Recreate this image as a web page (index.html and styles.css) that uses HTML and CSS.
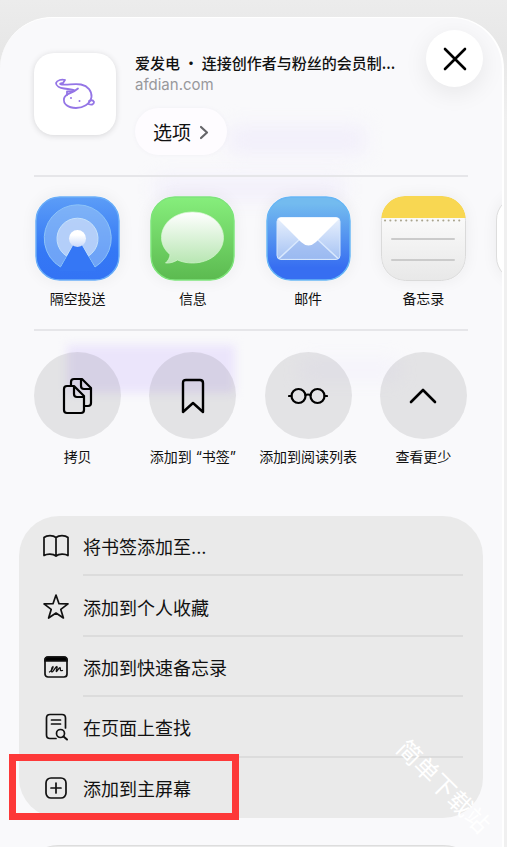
FILE: index.html
```html
<!DOCTYPE html>
<html lang="zh-CN">
<head>
<meta charset="UTF-8">
<meta name="viewport" content="width=device-width, initial-scale=1.0">
<title>爱发电</title>
<link rel="stylesheet" href="styles.css">
</head>
<body>

<main class="sheet">
  <span class="glow glow-title"></span>
  <span class="glow glow-subtitle"></span>
  <span class="glow glow-button"></span>
  <span class="glow glow-link"></span>

  <header class="header">
    <div class="site-icon">
      <svg width="42" height="34" viewBox="0 0 42 34" fill="none" stroke="#9475e6" stroke-width="1.8" stroke-linecap="round" stroke-linejoin="round">
        <path d="M11 3C8 2 3 3 2 6C2 9 6 11 10 11.500C14 12 18 12.500 21 13.500M11 3L9 6C6 6.500 5 7 8 7.500C14 8.500 20 6 27 7.500C34 9 38 14 37.500 20C36 27.500 29 31 22 31C14 31 9 27 10 21.500C11 16 18 17 24 11.500"/>
        <path d="M13 18V14.500L18 14.500M35 24C37 23 39 23 40 25C40 28 37 28 34.500 27"/>
        <path d="M17 21v.1M25.500 24v.1" stroke-width="2"/>
      </svg>
    </div>
    <div class="site-info">
      <h1 class="site-title">爱发电 · 连接创作者与粉丝的会员制...</h1>
      <p class="site-url">afdian.com</p>
      <button class="options">选项
        <svg width="10" height="16" viewBox="0 0 10 16" fill="none" stroke="#66666a" stroke-width="2.200" stroke-linecap="round" stroke-linejoin="round"><path d="M2 3l6 5.500L2 14"/></svg>
      </button>
    </div>
    <button class="close" aria-label="关闭">
      <svg width="24" height="24" viewBox="0 0 24 24" stroke="#000" stroke-width="2.600" stroke-linecap="round"><path d="M2 2l20 20M22 2L2 22"/></svg>
    </button>
  </header>

  <nav class="row apps">
    <a class="item" href="#">
      <svg class="app" viewBox="0 0 85 85">
        <defs>
          <linearGradient id="air" x2="0" y2="1"><stop stop-color="#5c9df7"/><stop offset=".65" stop-color="#3478f5"/><stop offset="1" stop-color="#3373f4"/></linearGradient>
          <linearGradient id="dot" x2="0" y2="1"><stop offset=".3" stop-color="#fff"/><stop offset="1" stop-color="#c9dafa"/></linearGradient>
        </defs>
        <rect x="1" y="1" width="83" height="83" rx="24" fill="url(#air)" stroke="#69adf8" stroke-width="1.500"/>
        <path d="M25.500 71A33.500 33.500 0 1 1 60 71L42.500 42Z" fill="#9fc9f8" fill-opacity=".55" stroke="#8cc3f8"/>
        <path d="M31.500 60A20.500 20.500 0 1 1 53.500 60L42.500 42Z" fill="#c4d8f9" fill-opacity=".8" stroke="#c5e1fb"/>
        <path d="M26 71.500L38.500 48.500H46.500L59.500 71.500L61 75H24Z" fill="#3577f5"/>
        <circle cx="42.500" cy="42.500" r="8.500" fill="url(#dot)"/>
      </svg>
      <span class="label">隔空投送</span>
    </a>
    <a class="item" href="#">
      <svg class="app" viewBox="0 0 85 85">
        <defs>
          <linearGradient id="msg" x2="0" y2="1"><stop stop-color="#86ee7c"/><stop offset="1" stop-color="#5cba50"/></linearGradient>
          <linearGradient id="bubble" x2="0" y2="1"><stop stop-color="#fff"/><stop offset="1" stop-color="#b8e6b3"/></linearGradient>
        </defs>
        <rect x="1" y="1" width="83" height="83" rx="24" fill="url(#msg)" stroke="#7ee47b" stroke-width="1.500"/>
        <path d="M42.500 16C60 16 73.500 27 73.500 41.500C73.500 56 60 67 42.500 67C37 67 32 66 27.500 64C24 66 20 67.500 15.500 67C18 65 20 61.500 20 58.500C14.500 54 11.500 48 11.500 41.500C11.500 27 25 16 42.500 16Z" fill="url(#bubble)" stroke="#d5f8d0" stroke-width=".7"/>
      </svg>
      <span class="label">信息</span>
    </a>
    <a class="item" href="#">
      <svg class="app" viewBox="0 0 85 85">
        <defs>
          <linearGradient id="mail" x2="0" y2="1"><stop offset=".08" stop-color="#73bbef"/><stop offset=".85" stop-color="#376ef1"/></linearGradient>
          <linearGradient id="envelope" x2="0" y2="1"><stop stop-color="#e9f1fd"/><stop offset="1" stop-color="#a5c2f3"/></linearGradient>
        </defs>
        <rect x="1" y="1" width="83" height="83" rx="24" fill="url(#mail)" stroke="#67b6f5" stroke-width="1.500"/>
        <rect x="11" y="21.500" width="63" height="42" rx="4" fill="url(#envelope)" stroke="#d5e6fc"/>
        <path d="M13 62.500L34 43H51L72 62.500" fill="#92b2ee" fill-opacity=".55" stroke="#d9e8fd" stroke-width="1.500"/>
        <path d="M12 23Q13 21.500 15 21.500H70Q72 21.500 73 23L50 46Q42.500 53 35 46Z" fill="#fff"/>
      </svg>
      <span class="label">邮件</span>
    </a>
    <a class="item" href="#">
      <svg class="app" viewBox="0 0 85 85">
        <defs>
          <linearGradient id="note" x2="0" y2="1"><stop offset=".2" stop-color="#fbfbfb"/><stop offset="1" stop-color="#e8e8e8"/></linearGradient>
          <clipPath id="noteShape"><rect width="85" height="85" rx="24"/></clipPath>
        </defs>
        <rect x=".5" y=".5" width="84" height="84" rx="24" fill="url(#note)" stroke="#dadada"/>
        <path d="M0 0H85V22H0Z" fill="#f8d752" clip-path="url(#noteShape)"/>
        <path d="M4 24.500H82" stroke="#aaa58f" stroke-width="2" stroke-linecap="round" stroke-dasharray=".1 5.200"/>
        <path d="M11 43H73M11 64H73" stroke="#cbcbcb" stroke-width="2" stroke-linecap="round"/>
      </svg>
      <span class="label">备忘录</span>
    </a>
    <a class="item" href="#" aria-label="更多">
      <span class="app app-blank"></span>
    </a>
  </nav>

  <div class="row actions">
    <button class="item">
      <span class="circle">
        <svg width="32" height="38" viewBox="0 0 32 38" fill="none" stroke="#000" stroke-width="2.200" stroke-linejoin="round">
          <path d="M9 8V5Q9 2 12 2H20L29 11V26Q29 29 26 29H23M19 2V9Q19 12 22 12H29"/>
          <path d="M5 9H12L22 19V33Q22 36 19 36H5Q2 36 2 33V12Q2 9 5 9ZM12 9V17Q12 20 15 20H22"/>
        </svg>
      </span>
      <span class="label">拷贝</span>
    </button>
    <button class="item">
      <span class="circle">
        <svg width="24" height="36" viewBox="0 0 24 36" fill="none" stroke="#000" stroke-width="2.400" stroke-linejoin="round"><path d="M2 34V5Q2 2 5 2H19Q22 2 22 5V34L12 25Z"/></svg>
      </span>
      <span class="label">添加到 “书签”</span>
    </button>
    <button class="item">
      <span class="circle">
        <svg width="40" height="18" viewBox="0 0 40 18" fill="none" stroke="#000" stroke-width="2.200" stroke-linecap="round"><circle cx="10.500" cy="9" r="7"/><circle cx="29.500" cy="9" r="7"/><path d="M17.500 8Q20 7 22.500 8M1 9H3.500M36.500 9H39"/></svg>
      </span>
      <span class="label">添加到阅读列表</span>
    </button>
    <button class="item">
      <span class="circle">
        <svg width="28" height="18" viewBox="0 0 28 18" fill="none" stroke="#000" stroke-width="2.600" stroke-linecap="round" stroke-linejoin="round"><path d="M2 15L14 3L26 15"/></svg>
      </span>
      <span class="label">查看更少</span>
    </button>
  </div>

  <section class="menu">
    <button class="menu-item">
      <svg class="menu-icon" viewBox="0 0 28 28"><path d="M14 5.500C11 3 5 3 2 5.500V23.500C5 21.500 11 21.500 14 24C17 21.500 23 21.500 26 23.500V5.500C23 3 17 3 14 5.500ZM14 5.500V24"/></svg>
      <span class="menu-text">将书签添加至...</span>
    </button>
    <button class="menu-item">
      <svg class="menu-icon" viewBox="0 0 28 28"><path d="M14 2L17 10.700L26 10.900L18.800 16.400L21.400 25L14 20L6.600 25L9.200 16.400L2 10.900L11 10.700Z"/></svg>
      <span class="menu-text">添加到个人收藏</span>
    </button>
    <button class="menu-item">
      <svg class="menu-icon" viewBox="0 0 28 28"><rect x="3" y="4" width="22" height="20" rx="3"/><path d="M3 8V7Q3 4 6 4H22Q25 4 25 7V8Z" fill="#000"/><path d="M7.500 19C9.500 18 11.500 14.500 11 13.500C9.500 14 9 19 10 19C11.500 18.500 13.500 13.500 15 13.500C16 14 13.500 18.500 14.500 18.500C15.500 18 16.500 15 18 14.500C19 15 17 18.500 20.500 17.500" stroke-width="1.300"/></svg>
      <span class="menu-text">添加到快速备忘录</span>
    </button>
    <button class="menu-item">
      <svg class="menu-icon" viewBox="0 0 28 28"><path d="M14 25.500H8Q4.500 25.500 4.500 22V5Q4.500 1.500 8 1.500H20Q23.500 1.500 23.500 5V15M9.500 7H18.500M9.500 11H18.500"/><circle cx="18.500" cy="20.500" r="4"/><path d="M21.500 23.500L25 26.500" stroke-width="2"/></svg>
      <span class="menu-text">在页面上查找</span>
    </button>
    <button class="menu-item highlighted">
      <svg class="menu-icon" viewBox="0 0 28 28"><rect x="4" y="4" width="20" height="20" rx="5"/><path d="M14 9V19M9 14H19"/></svg>
      <span class="menu-text">添加到主屏幕</span>
    </button>
    <span class="watermark">简单下载站</span>
  </section>

  <section class="menu menu-next"></section>
</main>

</body>
</html>
```

FILE: styles.css
```css
*,
*::before,
*::after {
  box-sizing: border-box;
}
body {
  margin: 0;
  height: 100vh;
  overflow: hidden;
  padding: 17px 3px 0 0;
  background: linear-gradient(#ececec, #e7e7e7 50px, #f0f0f0 120px);
  color: #111;
  font-family: Inter, "Noto Sans CJK SC", sans-serif;
}
button {
  border: 0;
  padding: 0;
  background: none;
  color: inherit;
  font-family: inherit;
}
a {
  color: inherit;
  text-decoration: none;
}
svg {
  display: block;
}
.sheet {
  position: relative;
  height: 100%;
  overflow: hidden;
  border-top: 1px solid #fff;
  border-right: 2px solid #fff;
  border-radius: 52px 52px 0 0;
  background: #f9f9fb;
}

/* page colours showing through the sheet */
.glow {
  position: absolute;
  background: #ebe5fb;
  filter: blur(10px);
}
.glow-title {
  top: 108px;
  left: 228px;
  width: 138px;
  height: 28px;
  opacity: 0.5;
}
.glow-subtitle {
  top: 160px;
  left: 155px;
  width: 190px;
  height: 22px;
  opacity: 0.5;
}
.glow-button {
  top: 327px;
  left: 67px;
  width: 168px;
  height: 48px;
  filter: blur(5px);
}
.glow-link {
  top: 342px;
  left: 300px;
  width: 100px;
  height: 20px;
  opacity: 0.3;
}

.header {
  position: relative;
  display: flex;
  gap: 19px;
  margin: 0 34px;
  padding: 35px 0 20px;
  border-bottom: 2px solid #e6e6e9;
}
.site-icon {
  display: flex;
  align-items: center;
  justify-content: center;
  width: 82px;
  height: 82px;
  border-radius: 20px;
  background: #fff;
  box-shadow: 0 1px 6px rgba(0, 0, 0, 0.14);
}
.site-title {
  margin: 0;
  font-family: "Noto Sans CJK SC", sans-serif;
  font-size: 15px;
  font-weight: 500;
  line-height: 20px;
  white-space: nowrap;
}
.site-url {
  margin: 0;
  color: #98989b;
  font-size: 15px;
  line-height: 24px;
}
.options {
  display: flex;
  align-items: center;
  gap: 8px;
  height: 47px;
  margin-top: 11px;
  padding: 0 18px;
  border-radius: 24px;
  background: #fefcff;
  font-size: 19px;
  box-shadow: 0 0 4px rgba(120, 100, 160, 0.06);
}
.close {
  position: absolute;
  top: 12px;
  right: -15px;
  display: flex;
  align-items: center;
  justify-content: center;
  width: 57px;
  height: 57px;
  border-radius: 50%;
  background: #fff;
  box-shadow: 0 6px 24px rgba(0, 0, 0, 0.08);
}

.row {
  position: relative;
  display: flex;
  margin: 0 21px 0 20px;
}
.item {
  display: flex;
  flex: 0 0 25%;
  flex-direction: column;
  align-items: center;
}
.apps {
  padding: 19px 0 22px;
}
.apps::after {
  content: "";
  position: absolute;
  right: 13px;
  bottom: 0;
  left: 14px;
  height: 2px;
  background: #e6e6e9;
}
.app {
  width: 85px;
  height: 85px;
  border-radius: 24px;
  box-shadow: 0 0 16px rgba(0, 0, 0, 0.06);
}
.app-blank {
  border: 1px solid #ddd;
  background: #fff;
}
.label {
  margin-top: 8px;
  font-size: 14px;
  line-height: 20px;
  white-space: nowrap;
}
.actions {
  padding: 21px 0 49px;
}
.circle {
  display: flex;
  align-items: center;
  justify-content: center;
  width: 87px;
  height: 87px;
  border-radius: 50%;
  background: rgba(0, 0, 0, 0.085);
}

.menu {
  position: relative;
  display: grid;
  grid-auto-rows: 1fr;
  min-height: 302px;
  margin: 0 19px 27px;
  border-radius: 40px;
  background: #eaeaea;
}
.menu-item {
  position: relative;
  display: flex;
  align-items: center;
  gap: 13px;
  padding-left: 23px;
  font-size: 18px;
  text-align: left;
}
.menu-item:not(.highlighted)::after {
  content: "";
  position: absolute;
  right: 20px;
  bottom: 0;
  left: 64px;
  height: 2px;
  background: #dcdcdc;
}
.menu-icon {
  width: 28px;
  height: 28px;
  fill: none;
  stroke: #111;
  stroke-width: 1.700;
  stroke-linecap: round;
  stroke-linejoin: round;
}
.highlighted::before {
  content: "";
  position: absolute;
  top: -4px;
  bottom: -2px;
  left: -10px;
  width: 230px;
  border: 7px solid #fd3838;
}
.watermark {
  position: absolute;
  right: -20px;
  bottom: 15px;
  color: #fff;
  font-size: 24px;
  line-height: 32px;
  white-space: nowrap;
  transform: rotate(45deg);
}
.menu-next {
  min-height: 80px;
  border-top: 1px solid #ddd;
}
```
